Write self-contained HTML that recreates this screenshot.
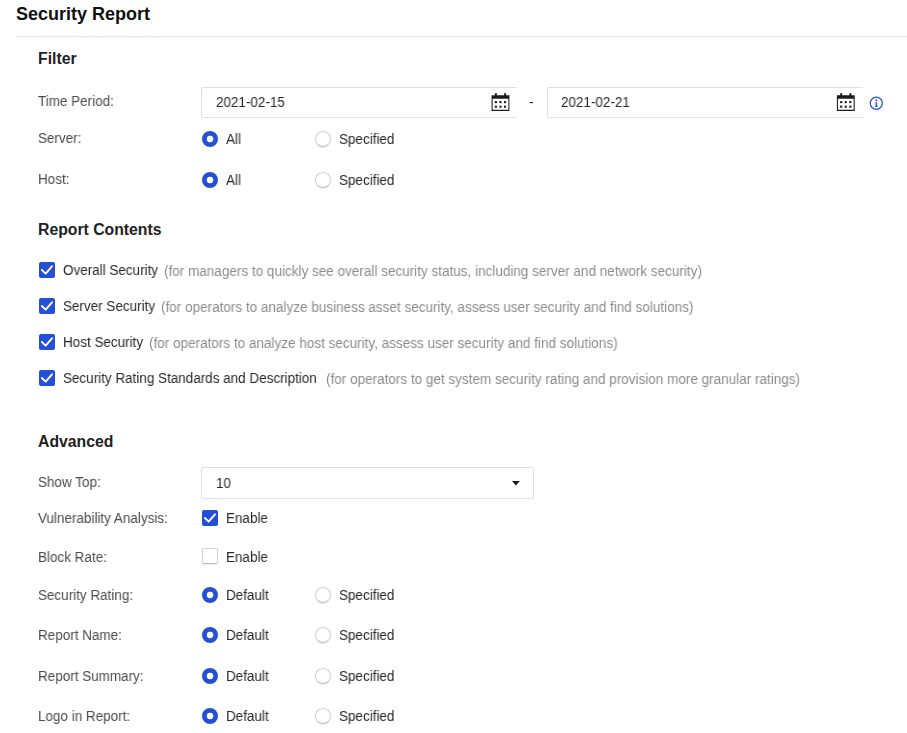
<!DOCTYPE html>
<html lang="en">
<head>
<meta charset="utf-8">
<title>Security Report</title>
<style>
*{box-sizing:border-box;margin:0;padding:0}
html,body{width:907px;height:733px;overflow:hidden;background:#fff}
body{font-family:"Liberation Sans",Arial,sans-serif;font-size:14px;color:#333;position:relative}
.abs{position:absolute;white-space:nowrap;line-height:20px}
.title{left:16px;top:3px;font-size:18px;font-weight:bold;color:#111;line-height:22px}
.hr{position:absolute;left:16px;top:36px;width:891px;height:1px;background:#e0e4ef}
.h2{font-size:16px;font-weight:bold;color:#222;left:38px}
.lbl{left:38px;color:#4c4c4c}
.val{color:#2a2a2a}
.lbl,.val{transform:scaleX(.962);transform-origin:0 50%;will-change:transform}
.gray{transform:scaleX(.9655);transform-origin:0 50%;will-change:transform}
.h2{transform:scaleX(.985);transform-origin:0 50%}
.gray{color:#8c8c8c}
.input{position:absolute;height:31px;border:1px solid #e0e0e0;border-right:none;border-radius:2px 0 0 2px;background:#fff}
.select{position:absolute;height:32px;border:1px solid #e0e0e0;border-radius:2px;background:#fff}
.radio{position:absolute;width:16px;height:16px;border-radius:50%;border:1px solid #d2d2d2;border-bottom-color:#bcbcbc;background:#fff;box-shadow:0 1px 1px rgba(0,0,0,.06)}
.radio.on{border:none;box-shadow:none;background:radial-gradient(circle at 50% 50%,#fff 0,#fff 3px,#2450d8 3.7px)}
.cb{position:absolute;width:16px;height:16px;border-radius:2px;border:1px solid #d0d0d0;border-bottom-color:#bababa;background:#fff;box-shadow:0 1px 1px rgba(0,0,0,.07)}
.cb.on{border:none;background:#2450d8;box-shadow:none}
.cb svg{position:absolute;left:0;top:0}
svg{display:block}
</style>
</head>
<body>
<div class="abs title">Security Report</div>
<div class="hr"></div>

<div class="abs h2" style="top:49px">Filter</div>

<div class="abs lbl" style="top:91px">Time Period:</div>
<div class="input" style="left:201px;top:87px;width:316px"></div>
<div class="abs val" style="left:216px;top:92px">2021-02-15</div>
<svg class="abs cal" style="left:491px;top:93px" width="19" height="18" viewBox="0 0 19 18"><g fill="#1c1c20" transform="translate(0.6 0)"><rect x="3.3" y="0.1" width="2" height="3.4" rx="0.9"/><rect x="12.5" y="0.1" width="2" height="3.4" rx="0.9"/><path d="M0 2.3h17.8v15.6H0zM1.05 5.7v11.05h15.7V5.7z" fill-rule="evenodd"/><rect x="3.25" y="8.05" width="2.1" height="2.1"/><rect x="7.85" y="8.05" width="2.1" height="2.1"/><rect x="12.35" y="8.05" width="2.1" height="2.1"/><rect x="3.25" y="12.65" width="2.1" height="2.1"/><rect x="7.85" y="12.65" width="2.1" height="2.1"/><rect x="12.35" y="12.65" width="2.1" height="2.1"/></g></svg>
<div class="abs val" style="left:529px;top:92px">-</div>
<div class="input" style="left:547px;top:87px;width:316px"></div>
<div class="abs val" style="left:561px;top:92px">2021-02-21</div>
<svg class="abs cal" style="left:836px;top:93px" width="19" height="18" viewBox="0 0 19 18"><g fill="#1c1c20" transform="translate(0.9 0)"><rect x="3.3" y="0.1" width="2" height="3.4" rx="0.9"/><rect x="12.5" y="0.1" width="2" height="3.4" rx="0.9"/><path d="M0 2.3h17.8v15.6H0zM1.05 5.7v11.05h15.7V5.7z" fill-rule="evenodd"/><rect x="3.25" y="8.05" width="2.1" height="2.1"/><rect x="7.85" y="8.05" width="2.1" height="2.1"/><rect x="12.35" y="8.05" width="2.1" height="2.1"/><rect x="3.25" y="12.65" width="2.1" height="2.1"/><rect x="7.85" y="12.65" width="2.1" height="2.1"/><rect x="12.35" y="12.65" width="2.1" height="2.1"/></g></svg>
<svg class="abs" style="left:869px;top:96px" width="15" height="15" viewBox="0 0 15 15"><g transform="translate(0.3 0.25)"><circle cx="7" cy="7" r="6.05" fill="#fff" stroke="#2450d8" stroke-width="1.2"/><circle cx="7" cy="4" r="1" fill="#2450d8"/><path d="M6 5.9h1.8v4.2h0.7v0.7H5.6v-0.7h0.7V6.6H6z" fill="#2450d8"/></g></svg>

<div class="abs lbl" style="top:128px">Server:</div>
<div class="radio on" style="left:202px;top:131px"></div>
<div class="abs val" style="left:226px;top:129px">All</div>
<div class="radio" style="left:315px;top:131px"></div>
<div class="abs val" style="left:339px;top:129px">Specified</div>

<div class="abs lbl" style="top:169px">Host:</div>
<div class="radio on" style="left:202px;top:172px"></div>
<div class="abs val" style="left:226px;top:170px">All</div>
<div class="radio" style="left:315px;top:172px"></div>
<div class="abs val" style="left:339px;top:170px">Specified</div>

<div class="abs h2" style="top:220px">Report Contents</div>

<div class="cb on" style="left:39px;top:262px"><svg width="16" height="16" viewBox="0 0 16 16"><path d="M2.9 8L6.6 11.6L13 4.3" fill="none" stroke="#fff" stroke-width="1.9" stroke-linecap="round" stroke-linejoin="round"/></svg></div>
<div class="abs val" style="left:63px;top:260px">Overall Security</div>
<div class="abs gray" style="left:164px;top:261px">(for managers to quickly see overall security status, including server and network security)</div>

<div class="cb on" style="left:39px;top:298px"><svg width="16" height="16" viewBox="0 0 16 16"><path d="M2.9 8L6.6 11.6L13 4.3" fill="none" stroke="#fff" stroke-width="1.9" stroke-linecap="round" stroke-linejoin="round"/></svg></div>
<div class="abs val" style="left:63px;top:296px">Server Security</div>
<div class="abs gray" style="left:161px;top:297px">(for operators to analyze business asset security, assess user security and find solutions)</div>

<div class="cb on" style="left:39px;top:334px"><svg width="16" height="16" viewBox="0 0 16 16"><path d="M2.9 8L6.6 11.6L13 4.3" fill="none" stroke="#fff" stroke-width="1.9" stroke-linecap="round" stroke-linejoin="round"/></svg></div>
<div class="abs val" style="left:63px;top:332px">Host Security</div>
<div class="abs gray" style="left:149px;top:333px">(for operators to analyze host security, assess user security and find solutions)</div>

<div class="cb on" style="left:39px;top:370px"><svg width="16" height="16" viewBox="0 0 16 16"><path d="M2.9 8L6.6 11.6L13 4.3" fill="none" stroke="#fff" stroke-width="1.9" stroke-linecap="round" stroke-linejoin="round"/></svg></div>
<div class="abs val" style="left:63px;top:368px">Security Rating Standards and Description</div>
<div class="abs gray" style="left:326px;top:369px">(for operators to get system security rating and provision more granular ratings)</div>

<div class="abs h2" style="top:432px">Advanced</div>

<div class="abs lbl" style="top:472px">Show Top:</div>
<div class="select" style="left:201px;top:467px;width:333px"></div>
<div class="abs val" style="left:216px;top:473px">10</div>
<svg class="abs" style="left:511px;top:480px" width="10" height="7" viewBox="0 0 10 7"><path d="M1 1h7.8L4.9 5.4z" fill="#1a1a1a"/></svg>

<div class="abs lbl" style="top:508px">Vulnerability Analysis:</div>
<div class="cb on" style="left:202px;top:510px"><svg width="16" height="16" viewBox="0 0 16 16"><path d="M2.9 8L6.6 11.6L13 4.3" fill="none" stroke="#fff" stroke-width="1.9" stroke-linecap="round" stroke-linejoin="round"/></svg></div>
<div class="abs val" style="left:226px;top:508px">Enable</div>

<div class="abs lbl" style="top:547px">Block Rate:</div>
<div class="cb" style="left:202px;top:548px"></div>
<div class="abs val" style="left:226px;top:547px">Enable</div>

<div class="abs lbl" style="top:585px">Security Rating:</div>
<div class="radio on" style="left:202px;top:587px"></div>
<div class="abs val" style="left:226px;top:585px">Default</div>
<div class="radio" style="left:315px;top:587px"></div>
<div class="abs val" style="left:339px;top:585px">Specified</div>

<div class="abs lbl" style="top:625px">Report Name:</div>
<div class="radio on" style="left:202px;top:627px"></div>
<div class="abs val" style="left:226px;top:625px">Default</div>
<div class="radio" style="left:315px;top:627px"></div>
<div class="abs val" style="left:339px;top:625px">Specified</div>

<div class="abs lbl" style="top:666px">Report Summary:</div>
<div class="radio on" style="left:202px;top:668px"></div>
<div class="abs val" style="left:226px;top:666px">Default</div>
<div class="radio" style="left:315px;top:668px"></div>
<div class="abs val" style="left:339px;top:666px">Specified</div>

<div class="abs lbl" style="top:706px">Logo in Report:</div>
<div class="radio on" style="left:202px;top:708px"></div>
<div class="abs val" style="left:226px;top:706px">Default</div>
<div class="radio" style="left:315px;top:708px"></div>
<div class="abs val" style="left:339px;top:706px">Specified</div>
</body>
</html>
